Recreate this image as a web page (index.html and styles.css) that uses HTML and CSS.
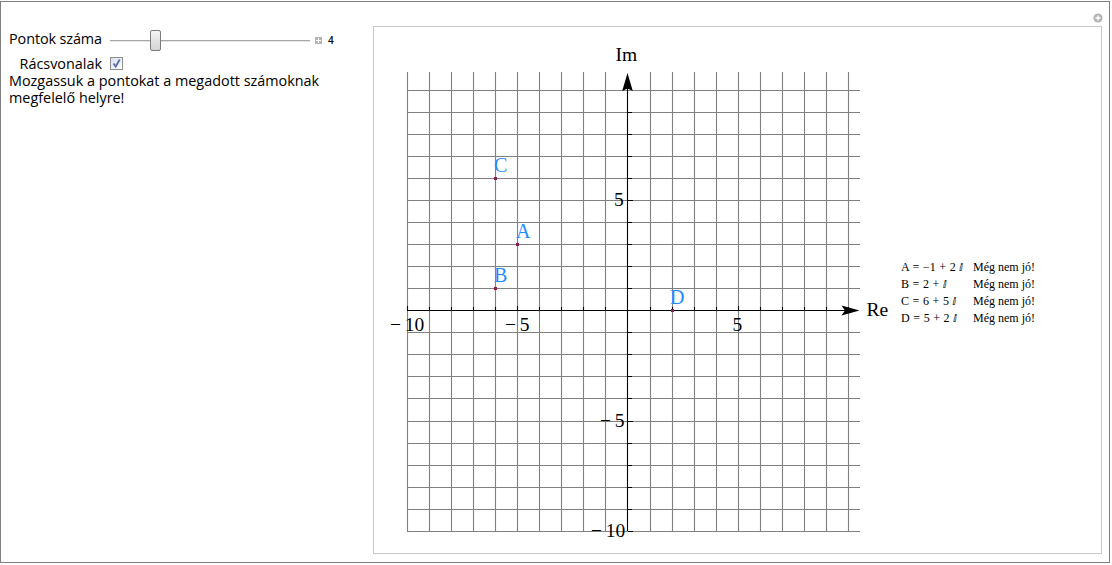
FILE: index.html
```html
<!DOCTYPE html>
<html lang="hu">
<head>
  <meta charset="UTF-8" />
  <title>Pontok a komplex számsíkon</title>
  <link rel="stylesheet" href="styles.css">
</head>
<body>

  <div class="frame">
    <svg class="add-btn" width="10" height="10" viewBox="0 0 10 10">
      <circle cx="5" cy="5" r="4.6" fill="#b4b4b4"/>
      <path d="M5 2.5v5M2.5 5h5" stroke="#fff" stroke-width="1.4"/>
    </svg>

    <div class="controls">
      <div class="control-grid">
        <span class="control-label first">Pontok száma</span>
        <div class="slider-row">
          <div class="slider">
            <div class="track"></div>
            <div class="thumb"></div>
          </div>
          <div class="plus"></div>
          <span class="value">4</span>
        </div>
        <span class="control-label">Rácsvonalak</span>
        <div class="checkbox">
          <svg width="11" height="11" viewBox="0 0 11 11">
            <path d="M2.5 5.5l2.2 3L8.8 1.5" fill="none" stroke="#5a6ea8" stroke-width="1.8"/>
          </svg>
        </div>
      </div>
      <p class="hint">Mozgassuk a pontokat a megadott számoknak megfelelő helyre!</p>
    </div>

    <div class="panel">
      <svg class="plot" width="521" height="526" viewBox="374 27 521 526">
        <!-- grid -->
        <path class="grid-lines" d="M407.5 72V531M429.5 72V531M451.5 72V531M473.5 72V531M495.5 72V531M517.5 72V531M539.5 72V531M561.5 72V531M583.5 72V531M605.5 72V531M650.5 72V531M672.5 72V531M694.5 72V531M716.5 72V531M738.5 72V531M760.5 72V531M782.5 72V531M804.5 72V531M826.5 72V531M848.5 72V531
          M407 90.5H860M407 112.5H860M407 134.5H860M407 156.5H860M407 178.5H860M407 200.5H860M407 222.5H860M407 244.5H860M407 266.5H860M407 288.5H860M407 332.5H860M407 354.5H860M407 376.5H860M407 398.5H860M407 421.5H860M407 443.5H860M407 465.5H860M407 487.5H860M407 509.5H860M407 531.5H860"/>
        <!-- axes and ticks -->
        <path class="axis" d="M407 310.5H846M627.5 88V531
          M407.5 306V310M429.5 307V310M451.5 307V310M473.5 307V310M495.5 307V310M517.5 306V310M539.5 307V310M561.5 307V310M583.5 307V310M605.5 307V310M650.5 307V310M672.5 307V310M694.5 307V310M716.5 307V310M738.5 306V310M760.5 307V310M782.5 307V310M804.5 307V310M826.5 307V310M848.5 307V310
          M628 112.5H632M628 134.5H632M628 156.5H632M628 178.5H632M628 200.5H633M628 222.5H632M628 244.5H632M628 266.5H632M628 288.5H632M628 332.5H632M628 354.5H632M628 376.5H632M628 398.5H632M628 421.5H633M628 443.5H632M628 465.5H632M628 487.5H632M628 509.5H632M628 531.5H633"/>
        <path class="arrow" d="M627.5 73L632.8 91L627.5 88.5L622.2 91Z"/>
        <path class="arrow" d="M859.5 310.5L841.5 315.5L845 310.5L841.5 305.5Z"/>

        <text class="axis-name" x="615.5" y="61">Im</text>
        <text class="axis-name" x="866.5" y="316">Re</text>

        <text class="tick" x="390" y="331">− 10</text>
        <text class="tick" x="505" y="331">− 5</text>
        <text class="tick" x="732.5" y="331">5</text>
        <text class="tick" x="614" y="206">5</text>
        <text class="tick" x="600" y="427">− 5</text>
        <text class="tick" x="591" y="537">− 10</text>

        <rect class="point" x="494" y="177" width="3" height="3"/>
        <rect class="point" x="516" y="243" width="3" height="3"/>
        <rect class="point" x="494" y="287" width="3" height="3"/>
        <rect class="point" x="671" y="309" width="3" height="3"/>

        <text class="point-name" x="494" y="172">C</text>
        <text class="point-name" x="516" y="238">A</text>
        <text class="point-name" x="494" y="282">B</text>
        <text class="point-name" x="670" y="304">D</text>
      </svg>

      <table class="legend">
        <tr><td>A = −1 + 2 <span class="imag">ⅈ</span></td><td>Még nem jó!</td></tr>
        <tr><td>B = 2 + <span class="imag">ⅈ</span></td><td>Még nem jó!</td></tr>
        <tr><td>C = 6 + 5 <span class="imag">ⅈ</span></td><td>Még nem jó!</td></tr>
        <tr><td>D = 5 + 2 <span class="imag">ⅈ</span></td><td>Még nem jó!</td></tr>
      </table>
    </div>
  </div>

</body>
</html>
```

FILE: styles.css
```css
body {
  margin: 0;
  padding: 0;
  background: #fff;
  color: #000;
  font-family: "Open Sans", sans-serif;
}

.frame {
  position: relative;
  box-sizing: border-box;
  width: 1110px;
  height: 562px;
  margin-top: 1px;
  border: 1px solid #808080;
  display: flex;
  padding: 24px 7px 8px 8px;
}

.add-btn {
  position: absolute;
  top: 11px;
  right: 6px;
}

.controls {
  width: 364px;
  flex: none;
  padding-top: 4px;
  font-size: 14.4px;
  line-height: 17px;
}

.control-grid {
  display: grid;
  grid-template-columns: 93px auto;
  column-gap: 8px;
  row-gap: 4px;
  align-items: center;
}

.control-label {
  text-align: right;
  white-space: nowrap;
}

.control-label.first {
  margin-bottom: 4px;
  letter-spacing: -0.1px;
}

.slider-row {
  display: flex;
  align-items: center;
}

.slider {
  position: relative;
  width: 200px;
  height: 21px;
}

.track {
  position: absolute;
  left: 0;
  right: 0;
  top: 10px;
  height: 1px;
  background: #a8a8a8;
  border-bottom: 1px solid #e4e4e4;
}

.thumb {
  position: absolute;
  left: 40px;
  top: 0;
  box-sizing: border-box;
  width: 11px;
  height: 21px;
  border: 1px solid #7c7c7c;
  border-radius: 2px;
  background: linear-gradient(#f4f4f4, #e2e2e2 50%, #d4d4d4);
}

.plus {
  position: relative;
  width: 7px;
  height: 7px;
  margin-left: 5px;
  background: #b4b4b4;
}

.plus::before,
.plus::after {
  content: "";
  position: absolute;
  background: #fff;
}

.plus::before {
  left: 3px;
  top: 1px;
  width: 1px;
  height: 5px;
}

.plus::after {
  left: 1px;
  top: 3px;
  width: 5px;
  height: 1px;
}

.value {
  margin-left: 6px;
  font-size: 10px;
  font-weight: 600;
}

.checkbox {
  box-sizing: border-box;
  width: 13px;
  height: 13px;
  border: 1px solid #8e8f8f;
  background: linear-gradient(135deg, #d8dff0, #fff);
  display: flex;
  align-items: center;
  justify-content: center;
}

.hint {
  margin: 0;
  width: 340px;
}

.panel {
  flex: none;
  box-sizing: border-box;
  width: 729px;
  height: 528px;
  border: 1px solid #c8c8c8;
  display: flex;
  align-items: flex-start;
}

.plot {
  flex: none;
  display: block;
}

.plot text {
  font-family: "Liberation Serif", serif;
}

.grid-lines {
  fill: none;
  stroke: #808080;
  stroke-width: 1.1;
}

.axis {
  fill: none;
  stroke: #000;
  stroke-width: 1.1;
}

.arrow {
  fill: #000;
}

.axis-name,
.tick {
  font-size: 19.5px;
}

.tick {
  word-spacing: -1px;
}

.point {
  fill: #8b1a55;
}

.point-name {
  font-size: 20px;
  fill: #1e8cff;
}

.legend {
  border-collapse: collapse;
  margin: 232px 0 0 6px;
  font-family: "Liberation Serif", serif;
  font-size: 12px;
  line-height: 17px;
}

.legend td {
  padding: 0;
  white-space: nowrap;
}

.legend td:first-child {
  width: 72px;
  word-spacing: 0.6px;
}

.imag {
  font-family: "DejaVu Sans", sans-serif;
  font-size: 10px;
  font-weight: bold;
}
```
